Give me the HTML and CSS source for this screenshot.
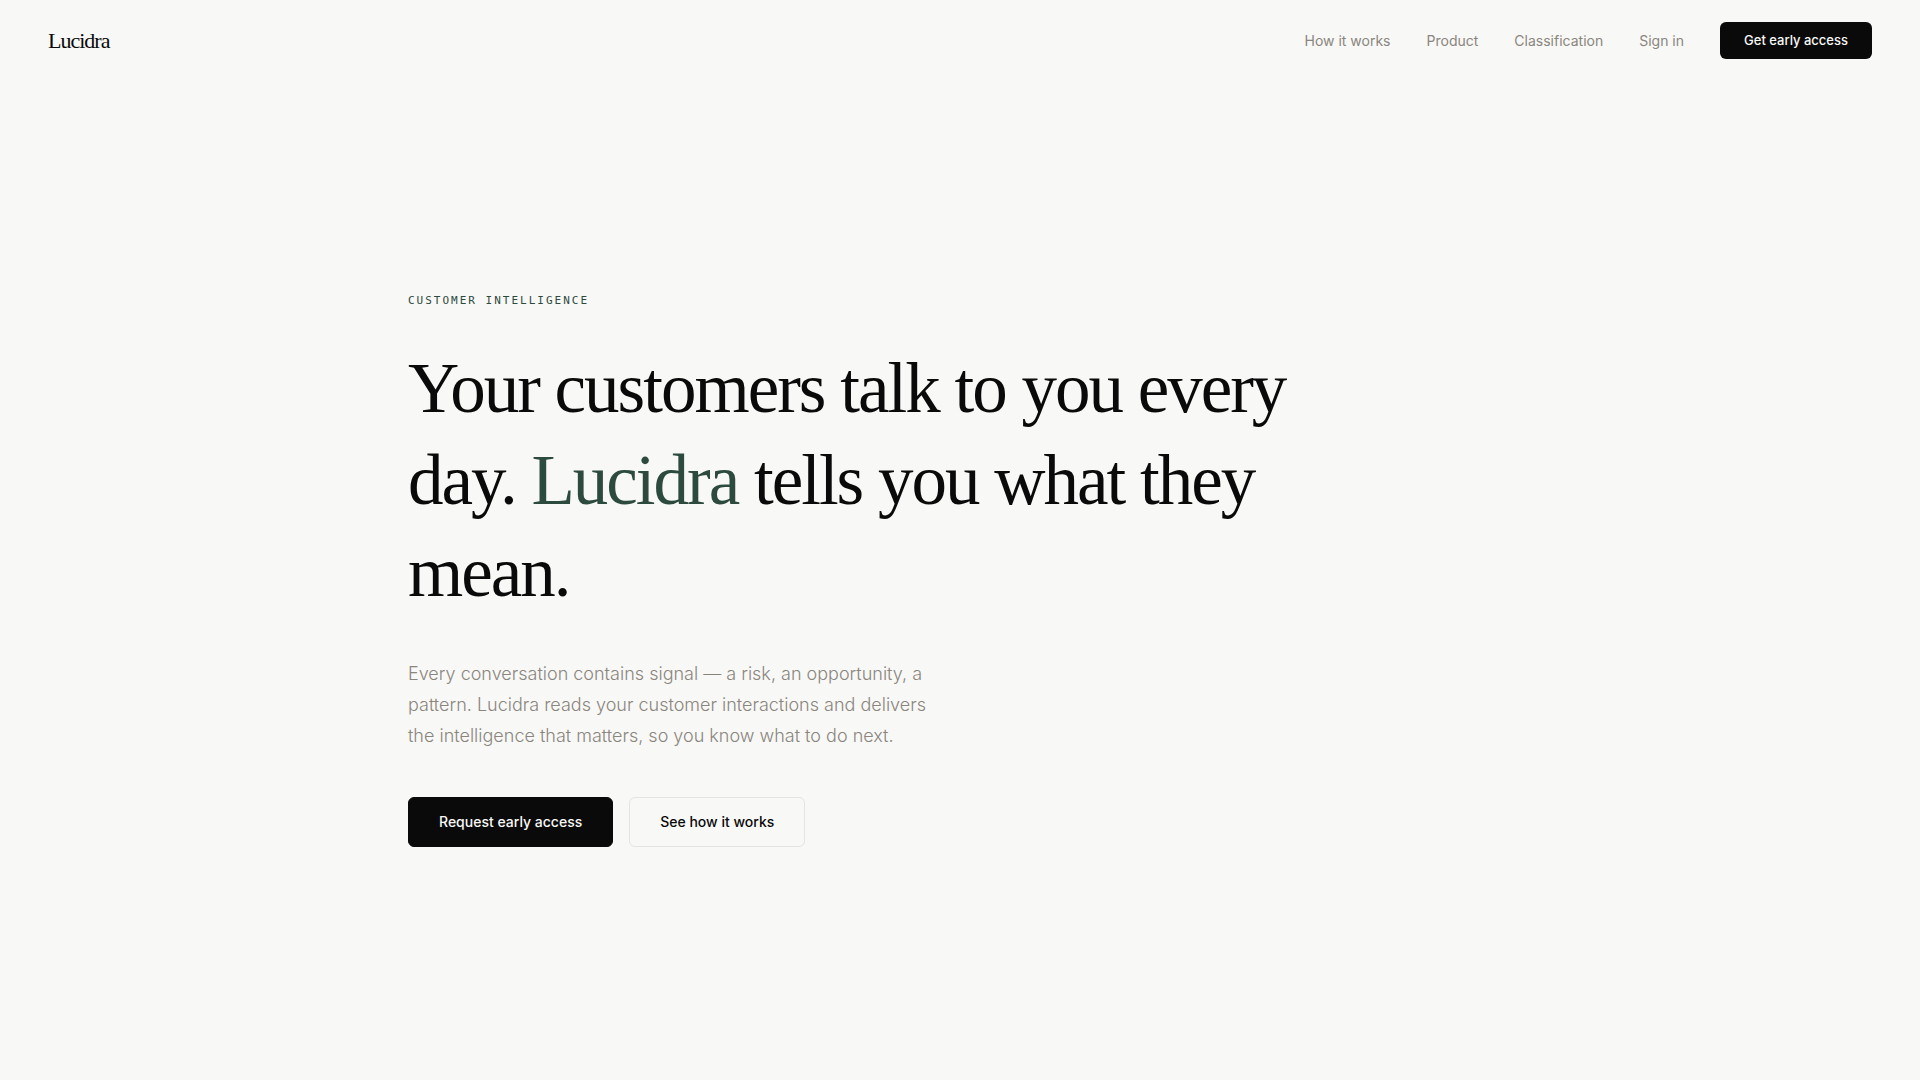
FILE: index.html
```html
<!DOCTYPE html>
<html lang="en">
<head>
    <meta charset="UTF-8">
    <meta name="viewport" content="width=device-width, initial-scale=1.0">
    <title>Lucidra</title>
    <link rel="stylesheet" href="styles.css">
</head>
<body>
    <nav class="nav">
        <a href="#" class="nav-logo">Lucidra</a>
        <div class="nav-links">
            <a href="#how">How it works</a>
            <a href="#product">Product</a>
            <a href="#classification">Classification</a>
            <a href="#signin">Sign in</a>
            <button type="button" class="nav-cta">Get early access</button>
        </div>
    </nav>

    <main class="hero">
        <p class="hero-label">Customer Intelligence</p>
        <h1>Your customers talk to you every day. <span class="accent">Lucidra</span> tells you what they mean.</h1>
        <p class="hero-sub">Every conversation contains signal — a risk, an opportunity, a pattern. Lucidra reads your customer interactions and delivers the intelligence that matters, so you know what to do next.</p>
        <div class="hero-actions">
            <button type="button" class="btn btn-primary">Request early access</button>
            <button type="button" class="btn btn-secondary">See how it works</button>
        </div>
    </main>
</body>
</html>
```
FILE: styles.css
```css
:root {
    --bg: #f8f8f6;
    --ink: #0a0a0a;
    --muted: #8a867e;
    --green: #2d4a3e;
    --border: #e4e4e0;
    --serif: "Liberation Serif", serif;
    --sans: Inter, sans-serif;
    --mono: "DejaVu Sans Mono", monospace;
}
* {
    margin: 0;
    padding: 0;
    box-sizing: border-box;
}
body {
    display: flex;
    flex-direction: column;
    min-height: 100vh;
    background: var(--bg);
    color: var(--ink);
    font-family: var(--sans);
}
a {
    color: inherit;
    text-decoration: none;
}
button {
    border: none;
    border-radius: 6px;
    font-family: inherit;
    font-weight: 500;
    cursor: pointer;
}

/* Navigation */
.nav {
    display: flex;
    align-items: center;
    justify-content: space-between;
    padding: 22px 48px;
}
.nav-logo {
    font-family: var(--serif);
    font-size: 22px;
    line-height: 32px;
    letter-spacing: -1px;
}
.nav-links {
    display: flex;
    align-items: center;
    gap: 36px;
    color: var(--muted);
    font-size: 14px;
}
.nav-cta {
    padding: 10px 24px;
    background: var(--ink);
    color: var(--bg);
    font-size: 13px;
    line-height: 17px;
}

/* Hero */
.hero {
    flex: 1;
    display: flex;
    flex-direction: column;
    justify-content: center;
    width: 100%;
    max-width: 1200px;
    margin: 0 auto;
    padding: 0 48px 22px;
}
.hero-label {
    margin-bottom: 32px;
    color: var(--green);
    font-family: var(--mono);
    font-size: 11px;
    line-height: 18px;
    letter-spacing: 2px;
    text-transform: uppercase;
}
h1 {
    max-width: 900px;
    margin-bottom: 40px;
    font-family: var(--serif);
    font-size: 71px;
    font-weight: 400;
    line-height: 92px;
    letter-spacing: -2px;
}
.accent {
    color: var(--green);
}
.hero-sub {
    max-width: 520px;
    margin-bottom: 46px;
    color: var(--muted);
    font-size: 18px;
    font-weight: 300;
    line-height: 31px;
}
.hero-actions {
    display: flex;
    gap: 16px;
}
.btn {
    padding: 15px 30px;
    font-size: 14px;
    line-height: 18px;
    border: 1px solid var(--ink);
}
.btn-primary {
    background: var(--ink);
    color: var(--bg);
}
.btn-secondary {
    background: transparent;
    border-color: var(--border);
    color: var(--ink);
}
```
